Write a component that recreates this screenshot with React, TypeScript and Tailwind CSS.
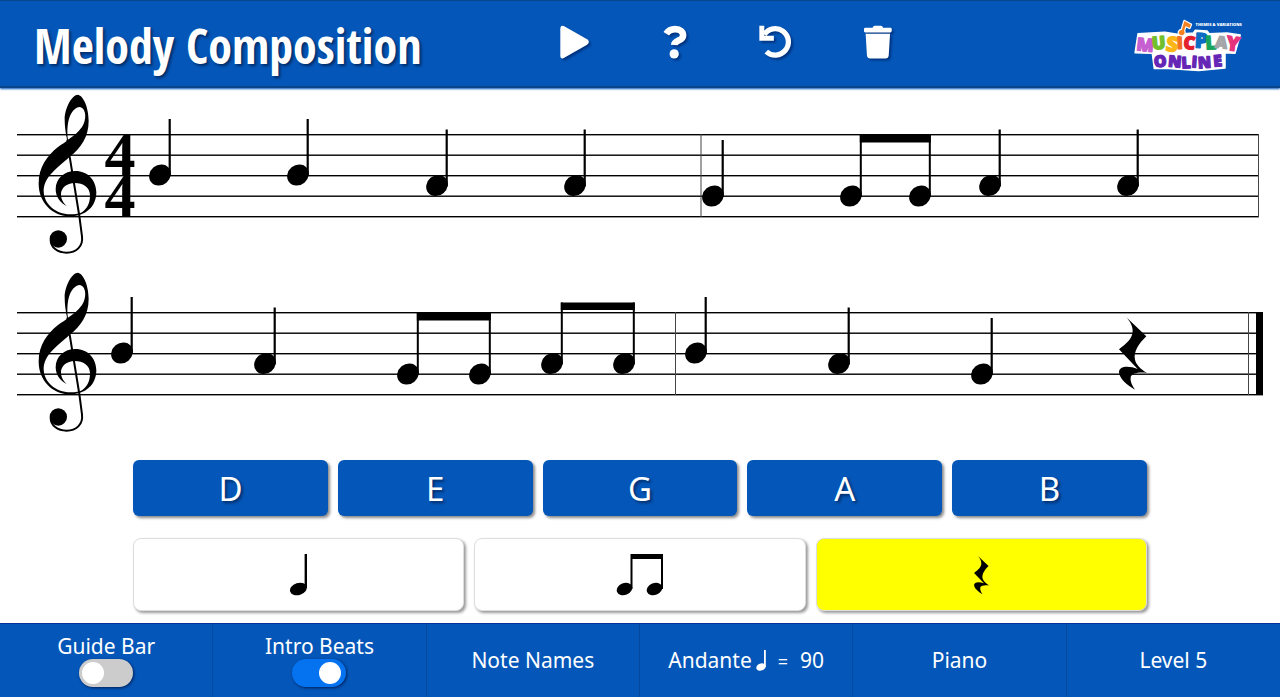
import React, { useState } from "react";
import clsx from "clsx";

type Pitch = "B" | "A" | "G";

// Vertical centre of each note head inside a staff
const pitchY: Record<Pitch, number> = { B: 87, A: 97.5, G: 108 };

const lineYs = [46, 66.5, 87, 107.5, 128];

const letters = ["D", "E", "G", "A", "B"];

const NoteHead = ({ x, y }: { x: number; y: number }) => (
  <ellipse cx={x} cy={y} rx="11.4" ry="10" transform={`rotate(-40 ${x} ${y})`} />
);

const Quarter = ({ x, pitch }: { x: number; pitch: Pitch }) => {
  const y = pitchY[pitch];
  return (
    <g>
      <NoteHead x={x} y={y} />
      <rect x={x + 8.6} y={y - 56} width="2.2" height="57" />
    </g>
  );
};

const Eighths = ({ x, gap, pitch }: { x: number; gap: number; pitch: Pitch }) => {
  const y = pitchY[pitch];
  const top = y - 61;
  return (
    <g>
      <NoteHead x={x} y={y} />
      <NoteHead x={x + gap} y={y} />
      <rect x={x + 8.8} y={top} width="2" height="62" />
      <rect x={x + gap + 8.8} y={top} width="2" height="62" />
      <rect x={x + 8.8} y={top} width={gap + 2} height="7.5" />
    </g>
  );
};

const restPath =
  "M139 67 L199 124 C175 147 160 172 165 194 C168 208 180 221 201 234 C178 230 156 234 152 246 C150 258 155 270 165 284 C140 270 118 250 117 232 C117 213 145 211 173 222 L117 163 C140 145 158 130 158 108 C158 92 150 80 139 67Z";

const Clef = () => (
  <g transform="scale(0.3333)">
    <path
      fillRule="evenodd"
      d="M200 354 C182 346 167 327 167 304 C167 272 192 249 227 249 C263 249 289 277 289 313 C289 356 257 385 211 385 C157 385 116 343 116 287 C116 236 142 203 174 177 C188 167 196 162 202 158 C197 138 194 115 194 94 C194 60 216 20 234 20 C252 24 266 62 266 98 C266 147 243 180 209 206 C171 241 131 266 131 310 C132 348 166 379 211 379 C228 379 238 378 246 373 C262 362 270 345 270 322 C270 298 250 285 224 285 C200 285 183 300 183 319 C183 334 190 345 200 354Z M204 155 C198 112 208 60 240 57 C260 62 260 96 246 117 C234 134 217 147 204 155Z"
    />
    <path
      d="M202 155 L209 206 L238 384 L246 445 C250 476 228 494 200 494 C172 494 152 478 152 455"
      fill="none"
      stroke="#000"
      strokeWidth="6"
    />
    <circle cx="175" cy="453" r="26" />
  </g>
);

const Staff = ({ end, label, children }: { end: number; label: string; children: React.ReactNode }) => (
  <svg viewBox="0 0 1280 178" className="block w-full" role="img" aria-label={label}>
    {lineYs.map((y) => (
      <rect key={y} x="17" y={y} width={end - 17} height="1.4" />
    ))}
    <Clef />
    {children}
  </svg>
);

const logoTop = [
  { ch: "M", x: 79, y: 133, r: 6, size: 54, color: "#c65fd0" },
  { ch: "U", x: 123, y: 127, r: -5, size: 54, color: "#72c02c" },
  { ch: "S", x: 159, y: 134, r: 8, size: 62, color: "#fbb515" },
  { ch: "I", x: 186, y: 126, r: -2, size: 52, color: "#f36f21" },
  { ch: "C", x: 212, y: 127, r: 6, size: 54, color: "#e5202e" },
  { ch: "P", x: 249, y: 123, r: 3, size: 62, color: "#0b6cc4" },
  { ch: "L", x: 280, y: 127, r: -3, size: 56, color: "#18a45b" },
  { ch: "A", x: 309, y: 124, r: 6, size: 50, color: "#a3a5a8" },
  { ch: "Y", x: 343, y: 132, r: 8, size: 60, color: "#e5337c" },
];

const logoBottom = [
  { ch: "O", x: 127, y: 180, r: -4 },
  { ch: "N", x: 169, y: 181, r: 5 },
  { ch: "L", x: 205, y: 185, r: -3 },
  { ch: "I", x: 228, y: 182, r: 4 },
  { ch: "N", x: 261, y: 184, r: -4 },
  { ch: "E", x: 301, y: 179, r: -5 },
];

const Logo = () => (
  <svg
    viewBox="45 30 330 160"
    className="h-[53px] w-[110px] overflow-visible font-extrabold [font-family:'Open_Sans',sans-serif]"
    role="img"
    aria-label="Musicplay Online"
  >
    {/* White backing behind the lettering */}
    <path
      d="M59 80 L140 76 L178 82 L226 78 L232 70 L268 72 L274 80 L328 78 L368 84 L352 140 L322 138 L322 184 L242 192 L150 186 L108 186 L102 140 L50 138Z"
      fill="#fff"
      stroke="#fff"
      strokeWidth="4"
      strokeLinejoin="round"
    />
    <g textAnchor="middle" strokeWidth="4" strokeLinejoin="round">
      {logoTop.map((l, i) => (
        <text key={i} x={l.x} y={l.y} fontSize={l.size} fill={l.color} stroke={l.color} transform={`rotate(${l.r} ${l.x} ${l.y})`}>
          {l.ch}
        </text>
      ))}
      {logoBottom.map((l, i) => (
        <text key={i} x={l.x} y={l.y} fontSize="48" fill="#6526b5" stroke="#6526b5" transform={`rotate(${l.r} ${l.x} ${l.y})`}>
          {l.ch}
        </text>
      ))}
    </g>
    <path
      d="M191 69 L199 42 L219 53 L215 63 L203 57 L198 72 A9 8 0 1 1 191 69Z"
      fill="#f58220"
      stroke="#fff"
      strokeWidth="7"
      paintOrder="stroke"
      strokeLinejoin="round"
    />
    <text x="233" y="56" fontSize="12" fill="#fff">
      THEMES &amp; VARIATIONS
    </text>
  </svg>
);

const tools = [
  {
    label: "Play",
    box: "57 70 100 108",
    art: <path d="M61 85 Q61 71 73 76 L142 116 Q153 124 142 132 L73 172 Q61 178 61 164Z" />,
  },
  {
    label: "Help",
    box: "358 70 100 108",
    art: (
      <>
        <path
          d="M377 99 C384 88 394 85 404 85 C420 85 428 93 428 104 C428 122 402 117 401 133"
          fill="none"
          stroke="currentColor"
          strokeWidth="20"
          strokeLinejoin="round"
        />
        <circle cx="401" cy="160" r="14" />
      </>
    ),
  },
  {
    label: "Undo",
    box: "661 70 100 108",
    art: (
      <>
        <path d="M671 101 A40 40 0 1 1 677 153" fill="none" stroke="currentColor" strokeWidth="16" />
        <path d="M656 75 H671 V105 H700 V120 H656Z" />
      </>
    ),
  },
  {
    label: "Delete",
    box: "966 70 100 108",
    art: (
      <path d="M976 81 H998 Q1000 75 1005 75 H1023 Q1028 75 1030 81 H1052 Q1056 81 1056 85 V91 Q1056 95 1052 95 H976 Q972 95 972 91 V85 Q972 81 976 81Z M977 99 H1051 L1047 165 Q1046 174 1037 174 H991 Q982 174 981 165Z" />
    ),
  },
];

// Small notes on the rhythm buttons
const QuarterIcon = () => (
  <svg viewBox="0 0 18 42" className="h-[42px] w-[18px]">
    <ellipse cx="8.4" cy="35" rx="8.6" ry="6" transform="rotate(-18 8.4 35)" />
    <rect x="14.6" y="0" width="2.4" height="34" />
  </svg>
);

const EighthsIcon = () => (
  <svg viewBox="0 0 48 42" className="h-[42px] w-[48px]">
    <ellipse cx="8.5" cy="35" rx="8" ry="6" transform="rotate(-22 8.5 35)" />
    <ellipse cx="38.5" cy="35" rx="8" ry="6" transform="rotate(-22 38.5 35)" />
    <path d="M14.5 0 H47 V35 H45 V5 H16.5 V35 H14.5Z" />
  </svg>
);

const RestIcon = () => (
  <svg viewBox="112 62 94 226" className="h-[40px] w-[17px]">
    <path d={restPath} />
  </svg>
);

const rhythms = [
  { id: "quarter", label: "Quarter note", icon: QuarterIcon },
  { id: "eighths", label: "Two eighth notes", icon: EighthsIcon },
  { id: "rest", label: "Quarter rest", icon: RestIcon },
];

const Toggle = ({ id, label, defaultChecked }: { id: string; label: string; defaultChecked?: boolean }) => (
  <div className="flex flex-col items-center border-r border-[#034a9e] pt-[9px]">
    <label htmlFor={id} className="leading-[26px]">
      {label}
    </label>
    <input
      id={id}
      type="checkbox"
      defaultChecked={defaultChecked}
      className="h-7 w-[54px] cursor-pointer appearance-none rounded-full bg-[#ccc] p-[3px] shadow-[1px_1px_3px_#00205a] before:block before:size-[22px] before:rounded-full before:bg-white checked:bg-[#0573ef] checked:before:translate-x-6"
    />
  </div>
);

const App = () => {
  const [rhythm, setRhythm] = useState("rest");

  return (
    <div className="flex min-h-screen flex-col bg-white text-black [font-family:'Noto_Sans',sans-serif]">
      {/* Header */}
      <header className="flex h-[88px] items-center border-t border-b-2 border-[#0a4589] bg-[#0457b9] text-white shadow-[0_1px_2px_#0457b9]">
        <h1 className="w-[41%] pt-1 pl-[34px] text-[48px] leading-none font-bold whitespace-nowrap [font-family:'Liberation_Sans_Narrow','Open_Sans_Condensed',sans-serif] text-shadow-[2px_2px_3px_#002b66]">
          Melody Composition
        </h1>
        <nav className="flex pb-1">
          {tools.map((tool) => (
            <button key={tool.label} aria-label={tool.label} className="flex w-[101px] cursor-pointer justify-center">
              <svg viewBox={tool.box} className="h-9 w-[33px] overflow-visible fill-current drop-shadow-[2px_2px_1px_#003380]">
                {tool.art}
              </svg>
            </button>
          ))}
        </nav>
        <div className="mr-[37px] ml-auto">
          <Logo />
        </div>
      </header>

      {/* Score */}
      <main className="flex-1">
        <Staff end={1259} label="Measures 1 and 2">
          <g fontSize="62" fontWeight="bold" textAnchor="middle" className="[font-family:'Liberation_Serif',serif]">
            <text x="120" y="87">4</text>
            <text x="120" y="128">4</text>
          </g>
          <Quarter x={160} pitch="B" />
          <Quarter x={298} pitch="B" />
          <Quarter x={437} pitch="A" />
          <Quarter x={575} pitch="A" />
          <rect x="700.5" y="46" width="1" height="83" fill="#444" />
          <Quarter x={713} pitch="G" />
          <Eighths x={851} gap={69} pitch="G" />
          <Quarter x={990} pitch="A" />
          <Quarter x={1128} pitch="A" />
          <rect x="1258" y="46" width="1" height="83" fill="#444" />
        </Staff>
        <Staff end={1263} label="Measures 3 and 4">
          <Quarter x={122} pitch="B" />
          <Quarter x={265} pitch="A" />
          <Eighths x={408} gap={72} pitch="G" />
          <Eighths x={552} gap={72} pitch="A" />
          <rect x="675" y="46" width="1" height="83" fill="#444" />
          <Quarter x={696} pitch="B" />
          <Quarter x={839} pitch="A" />
          <Quarter x={982} pitch="G" />
          <path d={restPath} transform="translate(1080 29) scale(0.3333)" />
          <rect x="1248" y="46" width="1" height="83" fill="#444" />
          <rect x="1256" y="46" width="7" height="83" />
        </Staff>

        {/* Pitch and rhythm pickers */}
        <div className="mx-auto w-[79.2%] pt-4 pb-3">
          <div className="grid grid-cols-5 gap-2.5">
            {letters.map((letter) => (
              <button
                key={letter}
                className="h-14 cursor-pointer rounded-md bg-[#0457b9] text-[33px] leading-none text-white shadow-[2px_2px_3px_#888] text-shadow-[2px_2px_3px_#002b66]"
              >
                {letter}
              </button>
            ))}
          </div>
          <div className="mt-[22px] grid grid-cols-3 gap-2.5">
            {rhythms.map((r) => (
              <button
                key={r.id}
                aria-label={r.label}
                aria-pressed={rhythm === r.id}
                onClick={() => setRhythm(r.id)}
                className={clsx(
                  "flex h-[73px] cursor-pointer items-center justify-center rounded-lg border border-[#ddd] shadow-[2px_2px_3px_#999]",
                  rhythm === r.id ? "bg-[#ff0]" : "bg-white"
                )}
              >
                <r.icon />
              </button>
            ))}
          </div>
        </div>
      </main>

      {/* Settings */}
      <footer className="grid h-[74px] grid-cols-6 border-t border-[#03309c] bg-[#0457b9] text-[21px] text-white">
        <Toggle id="guide-bar" label="Guide Bar" />
        <Toggle id="intro-beats" label="Intro Beats" defaultChecked />
        <button className="cursor-pointer border-r border-[#034a9e]">Note Names</button>
        <button className="flex cursor-pointer items-center justify-center border-r border-[#034a9e]">
          Andante
          <svg viewBox="0 0 12 22" className="ml-1 h-[22px] w-3 fill-current">
            <ellipse cx="5" cy="17" rx="4.8" ry="3.5" transform="rotate(-20 5 17)" />
            <rect x="8" y="0" width="1.8" height="17" />
          </svg>
          <span className="ml-2.5 text-lg">=</span>
          <span className="ml-3">90</span>
        </button>
        <button className="cursor-pointer border-r border-[#034a9e]">Piano</button>
        <button className="cursor-pointer">Level 5</button>
      </footer>
    </div>
  );
};

export default App;
